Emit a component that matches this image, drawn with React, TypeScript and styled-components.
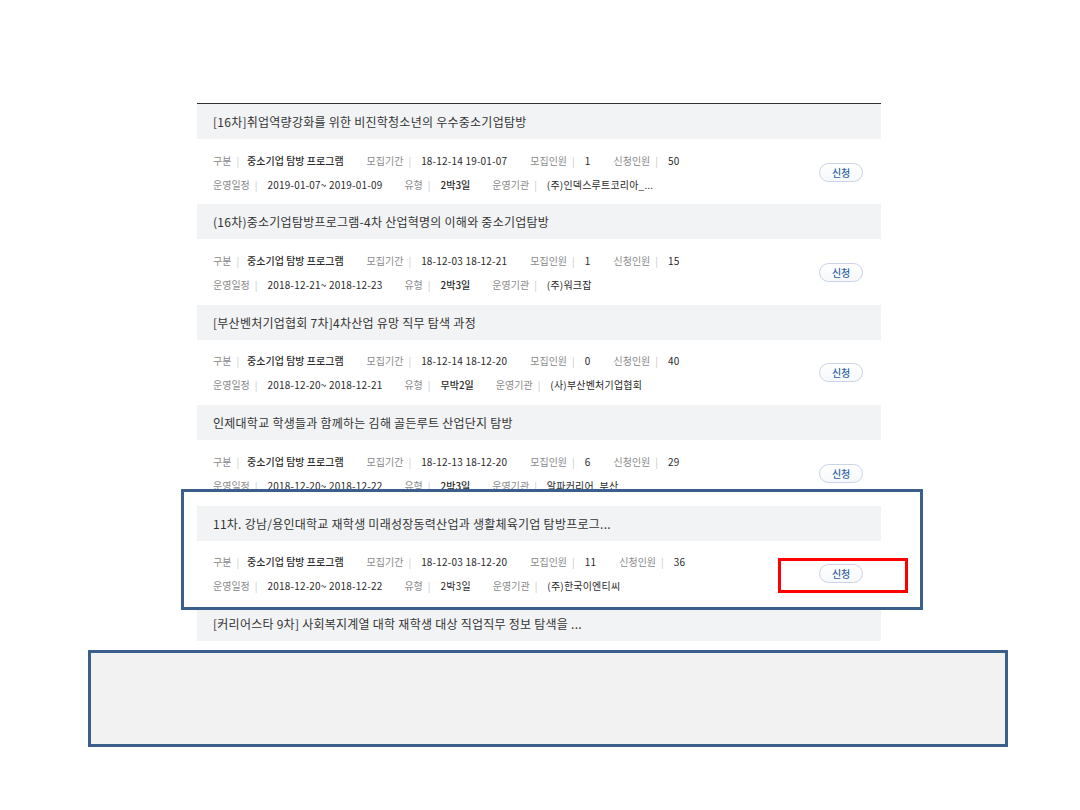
import React from "react";
import styled, { createGlobalStyle, css } from "styled-components";

const GlobalStyle = createGlobalStyle`
  html, body { margin: 0; padding: 0; background: #ffffff; }
  body { font-family: "Noto Sans CJK KR", "Noto Sans", sans-serif; color: #333; }
`;

const Page = styled.div`
  width: 1080px;
  min-height: 810px;
  display: flex;
  flex-direction: column;
`;

const List = styled.ul`
  list-style: none;
  margin: 103px 0 0 197px;
  padding: 0;
  width: 684px;
  border-top: 1px solid #333;
`;

const Item = styled.li<{ $framed?: boolean; $titleOnly?: boolean }>`
  display: flex;
  flex-direction: column;
  height: ${(p) => (p.$titleOnly ? "auto" : "100.4px")};
  ${(p) =>
    p.$framed &&
    css`
      position: relative;
      z-index: 1;
      &::before {
        content: "";
        position: absolute;
        top: -16.6px;
        left: -16px;
        right: -42px;
        bottom: -4px;
        background: #ffffff;
        border: 3px solid #3b5f8b;
        z-index: -1;
      }
    `}
`;

const TitleBar = styled.div`
  height: 35px;
  flex: none;
  background: #f2f3f5;
  display: flex;
  align-items: center;
  padding-left: 16px;
  font-size: 12px;
  letter-spacing: 0.25px;
  color: #333;
  white-space: nowrap;
  overflow: hidden;
`;

const Body = styled.div`
  flex: 1;
  display: flex;
  align-items: flex-start;
  padding: 9px 18px 0 16px;
`;

const Rows = styled.div`
  flex: 1;
  display: flex;
  flex-direction: column;
`;

const Row = styled.div<{ $gap: number }>`
  height: 24px;
  display: flex;
  align-items: center;
  gap: ${(p) => p.$gap}px;
  font-size: 10px;
  white-space: nowrap;
`;

const Field = styled.span`
  display: inline-flex;
  align-items: center;
`;

const Label = styled.span`
  color: #8a8a8a;
`;

const Sep = styled.span<{ $tight?: boolean }>`
  color: #c8c8c8;
  margin: 0 ${(p) => (p.$tight ? 8 : 10)}px 0 5px;
`;

const Value = styled.span<{ $strong?: boolean }>`
  color: #2a2a2a;
  letter-spacing: ${(p) => (p.$strong ? 0 : 0.2)}px;
  font-weight: ${(p) => (p.$strong ? 500 : 400)};
`;

const ApplyButton = styled.button<{ $marked?: boolean }>`
  position: relative;
  margin-top: 14.5px;
  width: 44px;
  height: 19px;
  padding: 0;
  border: 1px solid #c9d5e6;
  border-radius: 10px;
  background: linear-gradient(#ffffff, #f6f8fb);
  color: #2f5fa3;
  font-family: "Noto Sans CJK KR", sans-serif;
  font-size: 10px;
  font-weight: 500;
  letter-spacing: -0.3px;
  cursor: pointer;
  ${(p) =>
    p.$marked &&
    css`
      &::after {
        content: "";
        position: absolute;
        top: -7px;
        left: -42px;
        right: -46px;
        bottom: -11px;
        border: 3px solid #ff0000;
      }
    `}
`;

const NoteBox = styled.div`
  margin: 9px 0 0 88px;
  width: 920px;
  height: 97px;
  box-sizing: border-box;
  background: #f2f2f2;
  border: 3px solid #3b5f8b;
`;

type Program = {
  title: string;
  period: string;
  quota: string;
  applied: string;
  schedule: string;
  type: string;
  typeStrong: boolean;
  org: string;
};

const programs: Program[] = [
  {
    title: "[16차]취업역량강화를 위한 비진학청소년의 우수중소기업탐방",
    period: "18-12-14 19-01-07",
    quota: "1",
    applied: "50",
    schedule: "2019-01-07~ 2019-01-09",
    type: "2박3일",
    typeStrong: true,
    org: "(주)인덱스루트코리아_...",
  },
  {
    title: "(16차)중소기업탐방프로그램-4차 산업혁명의 이해와 중소기업탐방",
    period: "18-12-03 18-12-21",
    quota: "1",
    applied: "15",
    schedule: "2018-12-21~ 2018-12-23",
    type: "2박3일",
    typeStrong: true,
    org: "(주)워크잡",
  },
  {
    title: "[부산벤처기업협회 7차]4차산업 유망 직무 탐색 과정",
    period: "18-12-14 18-12-20",
    quota: "0",
    applied: "40",
    schedule: "2018-12-20~ 2018-12-21",
    type: "무박2일",
    typeStrong: true,
    org: "(사)부산벤처기업협회",
  },
  {
    title: "인제대학교 학생들과 함께하는 김해 골든루트 산업단지 탐방",
    period: "18-12-13 18-12-20",
    quota: "6",
    applied: "29",
    schedule: "2018-12-20~ 2018-12-22",
    type: "2박3일",
    typeStrong: true,
    org: "알파커리어_부산",
  },
  {
    title: "11차. 강남/용인대학교 재학생 미래성장동력산업과 생활체육기업 탐방프로그...",
    period: "18-12-03 18-12-20",
    quota: "11",
    applied: "36",
    schedule: "2018-12-20~ 2018-12-22",
    type: "2박3일",
    typeStrong: false,
    org: "(주)한국이엔티씨",
  },
];

const InfoField: React.FC<{ label: string; value: string; strong?: boolean; tight?: boolean }> = ({
  label,
  value,
  strong,
  tight,
}) => (
  <Field>
    <Label>{label}</Label>
    <Sep $tight={tight}>|</Sep>
    <Value $strong={strong}>{value}</Value>
  </Field>
);

export default function App() {
  return (
    <Page>
      <GlobalStyle />
      <List>
        {programs.map((p, i) => {
          const highlighted = i === 4;
          return (
            <Item key={i} $framed={highlighted}>
              <TitleBar>{p.title}</TitleBar>
              <Body>
                <Rows>
                  <Row $gap={23}>
                    <InfoField label="구분" value="중소기업 탐방 프로그램" strong tight />
                    <InfoField label="모집기간" value={p.period} />
                    <InfoField label="모집인원" value={p.quota} />
                    <InfoField label="신청인원" value={p.applied} />
                  </Row>
                  <Row $gap={22}>
                    <InfoField label="운영일정" value={p.schedule} />
                    <InfoField label="유형" value={p.type} strong={p.typeStrong} />
                    <InfoField label="운영기관" value={p.org} />
                  </Row>
                </Rows>
                <ApplyButton $marked={highlighted}>신청</ApplyButton>
              </Body>
            </Item>
          );
        })}
        <Item $titleOnly>
          <TitleBar>[커리어스타 9차] 사회복지계열 대학 재학생 대상 직업직무 정보 탐색을 ...</TitleBar>
        </Item>
      </List>
      <NoteBox />
    </Page>
  );
}
